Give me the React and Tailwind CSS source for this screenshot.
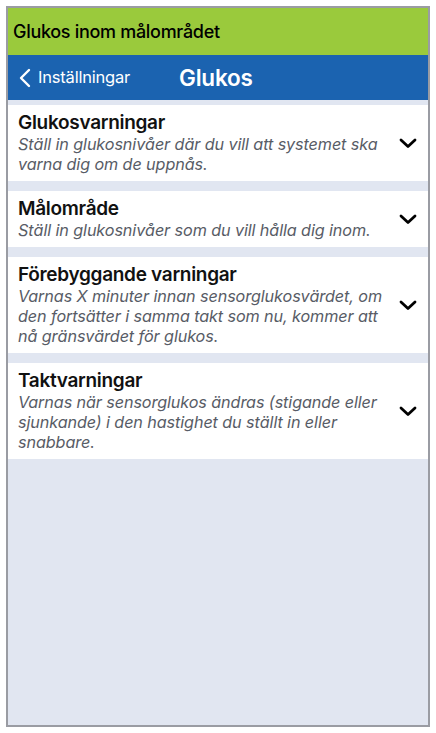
const settings = [
    {
        title: 'Glukosvarningar',
        text: 'Ställ in glukosnivåer där du vill att systemet ska varna dig om de uppnås.',
    },
    {
        title: 'Målområde',
        text: 'Ställ in glukosnivåer som du vill hålla dig inom.',
    },
    {
        title: 'Förebyggande varningar',
        text: 'Varnas X minuter innan sensorglukosvärdet, om den fortsätter i samma takt som nu, kommer att nå gränsvärdet för glukos.',
    },
    {
        title: 'Taktvarningar',
        text: 'Varnas när sensorglukos ändras (stigande eller sjunkande) i den hastighet du ställt in eller snabbare.',
    },
];

function Chevron({ down }) {
    // small hand-drawn chevrons, lucide's are too thin/short
    return down ? (
        <svg width="18" height="12" viewBox="0 0 18 12" className="shrink-0">
            <polyline points="2,3 9,9.5 16,3" fill="none" stroke="#000" strokeWidth="2.8" strokeLinecap="round" strokeLinejoin="round" />
        </svg>
    ) : (
        <svg width="12" height="20" viewBox="0 0 12 20" className="shrink-0">
            <polyline points="10,2 2,10 10,18" fill="none" stroke="#fff" strokeWidth="2.4" strokeLinecap="round" strokeLinejoin="round" />
        </svg>
    );
}

export default function App() {
    return (
        <div className="w-[436px] h-[733px] bg-white p-[6px] font-['Inter','Liberation_Sans',sans-serif]">
            <div className="h-[721px] border-2 border-[#9a9ca3] bg-[#e1e6f1] flex flex-col">
                <div className="h-[47px] bg-[#9aca3c] flex items-center px-[5px]">
                    <span className="text-[18px] font-medium text-black tracking-[-0.3px]">Glukos inom målområdet</span>
                </div>
                <div className="h-[45px] bg-[#1b63b0] flex items-center text-white">
                    <div className="flex items-center w-[171px] pl-[11px]">
                        <Chevron />
                        <span className="text-[16.5px] ml-[7px] tracking-[-0.2px]">Inställningar</span>
                    </div>
                    <span className="text-[22.5px] font-semibold tracking-[-0.2px]">Glukos</span>
                </div>
                <div className="pt-[5px] flex flex-col gap-[10px]">
                    {settings.map((item) => (
                        <div key={item.title} className="bg-white flex items-center pl-[10px] pr-[11px] pt-[6px] pb-[7px]">
                            <div className="flex-1 min-w-0 pr-[8px]">
                                <h3 className="text-[19px] font-semibold text-[#111] leading-[23px] tracking-[-0.3px]">{item.title}</h3>
                                <p className="text-[16.2px] italic text-[#585c66] leading-[20px] tracking-[-0.1px]">{item.text}</p>
                            </div>
                            <Chevron down />
                        </div>
                    ))}
                </div>
            </div>
        </div>
    );
}
